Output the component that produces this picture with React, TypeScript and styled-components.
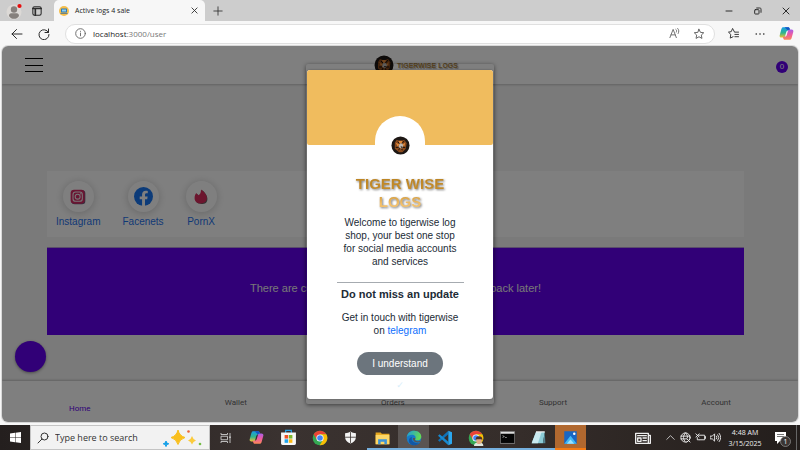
import React from "react";
import styled, { createGlobalStyle } from "styled-components";

const Global = createGlobalStyle`
  * { box-sizing: border-box; }
  body { margin: 0; font-family: "Liberation Sans", Arial, sans-serif; }
  button, input { font: inherit; color: inherit; }
  button { border: 0; padding: 0; background: none; }
`;

const UI = `"Open Sans", "Noto Sans", sans-serif`;

const Screen = styled.div`
  height: 100vh;
  display: flex;
  flex-direction: column;
  background: #f7f7f7;
  overflow: hidden;
`;

/* ---------- browser ---------- */
const TabStrip = styled.header`
  display: flex;
  align-items: center;
  flex: 0 0 21px;
  padding-left: 6px;
  background: #cdcdcd;
  font-family: ${UI};
`;
const IconButton = styled.button<{ $w: number; $color?: string }>`
  display: flex;
  align-items: center;
  justify-content: center;
  flex: 0 0 ${(p) => p.$w}px;
  height: 21px;
  color: ${(p) => p.$color ?? "#2c2c2c"};
`;
const Tab = styled.div`
  display: flex;
  align-items: center;
  align-self: flex-end;
  width: 151px;
  height: 21px;
  margin-left: 5px;
  padding-left: 5px;
  border-radius: 5px 5px 0 0;
  background: #f7f7f7;
`;
const TabTitle = styled.span`
  flex: 1;
  padding-left: 6px;
  color: #222;
  font-size: 7px;
  line-height: 12px;
`;
const Spacer = styled.div`
  flex: 1;
`;
const Toolbar = styled.div`
  display: flex;
  align-items: center;
  flex: 0 0 25px;
  padding: 0 1px 0 5px;
`;
const Address = styled.div`
  display: flex;
  align-items: center;
  flex: 1;
  height: 20px;
  margin: 0 5px 0 6px;
  padding: 0 3px 0 5px;
  border: 1px solid #e0e0e0;
  border-radius: 10px;
  background: #fff;
`;
const Url = styled.div`
  flex: 1;
  padding-left: 4px;
  color: #777;
  font: 8px/14px ${UI};
  b { color: #1c1c1c; font-weight: 400; }
`;

/* ---------- page ---------- */
const Page = styled.main`
  position: relative;
  display: flex;
  flex-direction: column;
  flex: 1;
  min-height: 0;
  margin: 0 2px 3px 2px;
  border-radius: 6px;
  background: #f4f4f4;
  overflow: hidden;
  box-shadow: 0 0 0 1px #d8d8d8;
`;
const AppBar = styled.div`
  display: grid;
  grid-template-columns: 1fr auto 1fr;
  align-items: center;
  flex: 0 0 38px;
  padding: 0 10px 0 23px;
  background: #fff;
  box-shadow: 0 1px 2px #0003;
`;
const Burger = styled.button`
  display: flex;
  flex-direction: column;
  justify-content: space-between;
  width: 18px;
  height: 14px;
  i { height: 1px; background: #000; }
`;
const Brand = styled.div`
  display: flex;
  align-items: center;
  gap: 3px;
  padding-left: 19px;
  color: #ad8440;
  font-weight: 700;
  font-size: 7px;
  text-shadow: 1px 1px 1px #0005;
`;
const CartBadge = styled.button`
  justify-self: end;
  width: 12px;
  height: 12px;
  margin-top: 4px;
  border-radius: 50%;
  background: #6200ee;
  color: #fff;
  font-size: 8px;
  line-height: 12px;
`;
const Content = styled.div`
  display: flex;
  flex-direction: column;
  flex: 1;
  gap: 10px;
  padding: 87px 54px 0 45px;
`;
const Categories = styled.div`
  display: flex;
  gap: 22px;
  height: 66px;
  padding: 10px 9px 0;
  background: #fff;
`;
const Category = styled.a`
  display: flex;
  flex-direction: column;
  align-items: center;
  gap: 3px;
  color: #1f72ec;
  font-size: 10px;
  line-height: 14px;
  text-decoration: none;
  white-space: nowrap;
`;
const Bubble = styled.span`
  display: flex;
  align-items: center;
  justify-content: center;
  width: 31px;
  height: 31px;
  border-radius: 50%;
  background: #fff;
  box-shadow: 0 1px 8px #0003;
`;
const EmptyState = styled.div`
  display: flex;
  align-items: center;
  justify-content: center;
  height: 88px;
  padding-bottom: 8px;
  border-top: 1px solid #b49ad8;
  background: #6200ee;
  color: #eee;
  font-size: 11px;
`;
const Fab = styled.button`
  position: absolute;
  left: 13px;
  bottom: 50px;
  width: 31px;
  height: 31px;
  border-radius: 50%;
  background: #6200ee;
  box-shadow: 0 1px 3px #0006;
`;
const BottomNav = styled.nav`
  display: flex;
  flex: 0 0 41px;
  padding-top: 15px;
  background: #fff;
  box-shadow: 0 -1px 2px #0003;
`;
const NavItem = styled.a<{ $active?: boolean }>`
  flex: 1 1 auto;
  padding-top: ${(p) => (p.$active ? 6 : 0)}px;
  color: ${(p) => (p.$active ? "#6200ee" : "#666")};
  font: 8px/14px Roboto, sans-serif;
  text-align: center;
  text-decoration: none;
`;

/* ---------- modal ---------- */
const Backdrop = styled.div`
  position: absolute;
  inset: 0;
  display: flex;
  align-items: center;
  justify-content: center;
  background: rgba(0, 0, 0, 0.5);
`;
const Paper = styled.div`
  width: 188px;
  padding: 6px 0 5px;
  border-radius: 2px;
  box-shadow: 0 1px 4px #0008;
`;
const Card = styled.section`
  display: flex;
  flex-direction: column;
  align-items: center;
  margin: 0 1px 0 1px;
  padding-bottom: 7px;
  border-radius: 3px;
  background: #fff;
  color: #212b36;
  text-align: center;
  overflow: hidden;
  box-shadow: 0 0 2px #0006;
`;
const Banner = styled.div`
  display: flex;
  justify-content: center;
  align-self: stretch;
  height: 75px;
  padding-top: 46px;
  border-radius: 0 0 2px 2px;
  background: #f0bc5e;
`;
const Seal = styled.div`
  display: flex;
  align-items: center;
  justify-content: center;
  width: 50px;
  height: 58px;
  border-radius: 25px;
  background: #fff;
`;
const Title = styled.h1`
  width: 127px;
  margin: 30px 0 5px;
  padding: 0 10px;
  background: linear-gradient(#b98222 0, #c98f2d 50%, #f3c06a 80%);
  background-clip: text;
  color: transparent;
  font-size: 15px;
  line-height: 18px;
  filter: drop-shadow(1px 1px 1px #0008);
`;
const Copy = styled.p`
  width: 122px;
  margin: 0;
  font-size: 10px;
  line-height: 13px;
  a { color: #0d6efd; text-decoration: none; }
`;
const Divider = styled.hr`
  width: 127px;
  margin: 14px 0 4px;
  border: 0;
  border-top: 1px solid #a6abb0;
`;
const Subtitle = styled.h2`
  margin: 0 0 9px;
  font-size: 11px;
  line-height: 15px;
  white-space: nowrap;
`;
const Confirm = styled.button`
  width: 86px;
  height: 23px;
  margin: 15px 0 3px;
  border-radius: 12px;
  background: #6c757d;
  color: #fff;
  font-size: 10px;
`;
const Tick = styled.span`
  color: #d9eefa;
  font: 9px/14px "DejaVu Sans", sans-serif;
`;

/* ---------- taskbar ---------- */
const Taskbar = styled.footer`
  display: flex;
  flex: 0 0 25px;
  background: linear-gradient(90deg, #241f1e, #3a3230 35%, #352d2a 65%, #231e1c);
  color: #eee;
  font-family: ${UI};
`;
const Start = styled.button`
  display: flex;
  align-items: center;
  justify-content: center;
  width: 30px;
`;
const Search = styled.label`
  display: flex;
  align-items: center;
  width: 180px;
  padding: 0 6px;
  border: 1px solid #c4c4c4;
  background: #f2f2f2;
  color: #333;
  input {
    flex: 1;
    min-width: 0;
    padding: 0 0 0 6px;
    border: 0;
    outline: 0;
    background: none;
    font-size: 9px;
  }
  input::placeholder { color: #333; opacity: 1; }
`;
const Apps = styled.div`
  display: grid;
  grid-template-columns: repeat(12, 1fr);
  flex: 0 0 47%;
`;
const AppButton = styled.button<{ $bg?: string; $line?: string }>`
  display: flex;
  align-items: center;
  justify-content: center;
  background: ${(p) => p.$bg ?? "none"};
  box-shadow: ${(p) => (p.$line ? `inset 0 -2px 0 ${p.$line}` : "none")};
`;
const Tray = styled.div`
  display: flex;
  align-items: center;
  height: 25px;
`;
const TrayButton = styled.button<{ $w: number }>`
  display: flex;
  align-items: center;
  justify-content: center;
  width: ${(p) => p.$w}px;
`;
const Clock = styled.div`
  width: 44px;
  font-size: 7px;
  line-height: 11px;
  text-align: center;
  white-space: nowrap;
`;
const ShowDesktop = styled.button`
  width: 4px;
  height: 25px;
  border-left: 1px solid #666;
`;

/* ---------- drawings ---------- */
const Line = ({ w = 11, vb = 24, sw = 2, children }: { w?: number; vb?: number; sw?: number; children: React.ReactNode }) => (
  <svg width={w} height={w} viewBox={`0 0 ${vb} ${vb}`} fill="none" stroke="currentColor" strokeWidth={sw} strokeLinecap="round" strokeLinejoin="round">
    {children}
  </svg>
);
const STAR = "M12 2.5l2.9 6.2 6.6.8-4.9 4.6 1.3 6.7-5.9-3.3-5.9 3.3 1.3-6.7-4.9-4.6 6.6-.8z";

const Profile = () => (
  <svg width="18" height="18" viewBox="0 0 18 18">
    <circle cx="8" cy="10" r="7.5" fill="#dcd9d6" />
    <circle cx="8" cy="7.5" r="3.2" fill="#85807c" />
    <path d="M3 14c0-2 1-2.800 2.200-2.800h5.600c1.200 0 2.200.8 2.200 2.800-1.200 2-3 2.800-5 2.800s-3.800-.8-5-2.800z" fill="#85807c" />
    <circle cx="13.500" cy="4" r="2.100" fill="#e80c0c" />
  </svg>
);
const Favicon = () => (
  <svg width="10" height="10" viewBox="0 0 20 20">
    <circle cx="10" cy="10" r="10" fill="#f5be4b" />
    <rect x="4" y="5" width="12" height="8" rx="1" fill="#2f7bb5" />
    <rect x="6" y="7" width="8" height="4" fill="#8fd0f3" />
    <path d="M3 14h14v1.500H3z" fill="#426f94" />
  </svg>
);
const Copilot = ({ w = 15 }: { w?: number }) => (
  <svg width={w} height={w} viewBox="0 0 24 24">
    <defs>
      <linearGradient id="cpA" x1="0" y1="0" x2="0" y2="1">
        <stop offset="0" stopColor="#159de6" /><stop offset=".55" stopColor="#32b58b" /><stop offset="1" stopColor="#f5c331" />
      </linearGradient>
      <linearGradient id="cpB" x1="0" y1="0" x2="0" y2="1">
        <stop offset="0" stopColor="#a65ee8" /><stop offset=".5" stopColor="#ee5aa0" /><stop offset="1" stopColor="#fb8a56" />
      </linearGradient>
    </defs>
    <path d="M7 2h7.500c1.500 0 2.200 1 2.600 2.200L18 7h-3c-2 0-2.900 1-3.400 2.700L9.500 17c-.5 1-1.200 1.500-2.500 1.500H4c-2.500 0-3.500-1.800-2.800-4.200l2.500-9C4.300 3 5.300 2 7 2z" fill="url(#cpA)" />
    <path d="M17 22H9.500c-1.500 0-2.200-1-2.600-2.200L6 17h3c2 0 2.900-1 3.400-2.700L14.500 7c.5-1 1.200-1.500 2.500-1.500h3c2.500 0 3.500 1.800 2.800 4.200l-2.500 9C19.700 21 18.700 22 17 22z" fill="url(#cpB)" />
    <path d="M9 2h5.500c1.500 0 2.200 1 2.600 2.200l.4 1.300c-2 0-2.800.5-3.300 1.500z" fill="#1553c5" />
  </svg>
);
const Tiger = ({ w }: { w: number }) => (
  <svg width={w} height={w} viewBox="0 0 20 20">
    <circle cx="10" cy="10" r="9.500" fill="#1d1714" />
    <path d="M4 7l2-3 2.500 1h3L14 4l2.500 3.500-1 6L12 17H8.500L4 13.500z" fill="#8b4a1c" />
    <path d="M5 7l4 2-2 2zM15 7l-3 2 2 2zM8 5l1 3h2l1-3z" fill="#e1893a" />
    <path d="M7 6l2 2M14 5l-2.500 3M5 12l3 0M15 12l-3 0M8 15l1-2M12 15l-1-2" stroke="#16100d" strokeWidth="1" />
    <path d="M9 8h3l1 2.500-2 3-3-2z" fill="#bcb7b0" />
    <path d="M10 11h2l-1 2z" fill="#271812" />
  </svg>
);
const Instagram = () => (
  <svg width="16" height="16" viewBox="0 0 24 24">
    <rect x="2" y="2" width="21" height="21" rx="5" fill="#686080" />
    <rect x="1" y="1" width="21" height="21" rx="5" fill="#d52b64" />
    <g fill="none" stroke="#eee" strokeWidth="1.600">
      <rect x="4.500" y="4.500" width="14" height="14" rx="4" /><circle cx="11.500" cy="11.500" r="3.700" />
    </g>
    <circle cx="16" cy="7.200" r="1" fill="#fff" />
  </svg>
);
const Facebook = () => (
  <svg width="19" height="19" viewBox="0 0 24 24">
    <circle cx="12" cy="12" r="12" fill="#1877f2" />
    <path d="M16.700 15.500l.5-3.500h-3.300V9.800c0-1 .5-1.900 2-1.900h1.500v-3s-1.400-.2-2.700-.2c-2.700 0-4.500 1.700-4.500 4.700V12h-3v3.500h3v8.400a12 12 0 0 0 3.700 0v-8.400z" fill="#fff" />
  </svg>
);
const Flame = () => (
  <svg width="14" height="16" viewBox="0 0 24 26">
    <path d="M15 2c3 3 8 8 8 14 0 7-4 9-10 9S3 23 3 17c0-4 1-7 3-9 1 1 2 3 2 4 4-1 6-5 5-10z" fill="#666" />
    <path d="M12 0c5 4 10 9 10 14 0 7-4 10-10 10S1 21 1 15c0-4 1-7 3-9 1 1 2 3 3 4 4-1 5-5 5-10z" fill="#d82b5c" />
  </svg>
);
const Sparkles = () => (
  <svg width="40" height="18" viewBox="0 0 40 18">
    <path d="M15 1q1.500 6 7 7.500-5.500 1.500-7 7-1.500-5.500-7-7 5.500-1.500 7-7.500z" fill="#f9bf1d" stroke="#f9bf1d" strokeLinejoin="round" />
    <path d="M29 7q1 3.500 4 4.500-3 1-4 4-1-3-4-4 3-1 4-4.500z" fill="#fbcb3c" />
    <path d="M3 12l.8 2 2 .8-2 .8-.8 2-.8-2-2-.8 2-.8z" fill="#14a0e8" stroke="#14a0e8" />
    <circle cx="25.500" cy="2.500" r="1.300" fill="#ec6237" /><circle cx="37" cy="15" r="1.300" fill="#75bd46" />
  </svg>
);
const Chrome = ({ face }: { face?: boolean }) => (
  <svg width="16" height="16" viewBox="0 0 24 24">
    <circle cx="12" cy="12" r="11" fill="#34a853" />
    <path d="M12 1a11 11 0 0 1 9.500 5.500H12L7.300 14.700 2.500 6.500A11 11 0 0 1 12 1z" fill="#ea4335" />
    <path d="M21.500 6.500A11 11 0 0 1 11.500 23l5.200-8.300L12 6.500z" fill="#fbbc05" />
    <circle cx="12" cy="12" r="5.400" fill="#fff" /><circle cx="12" cy="12" r="4.200" fill="#4285f4" />
    {face && (
      <g>
        <path d="M9 24c0-4 2-5 7-5s7 1 7 5z" fill="#dfe7dc" />
        <path d="M11.500 15c0-4.500 2-5.500 5-5.500s5 1 5 5.500z" fill="#4a3328" />
        <path d="M12.500 14h8v3.500c0 2-2 3.500-4 3.500s-4-1.500-4-3.500z" fill="#e0a985" />
      </g>
    )}
  </svg>
);
const TaskView = () => (
  <svg width="12" height="12" viewBox="0 0 24 24" fill="none" stroke="#ccc" strokeWidth="1.800">
    <path d="M2 2v3h13V2M2 22v-3h13v3M2 8.500h13v7H2zM20 2v20" /><path d="M18.500 9h3v3h-3z" fill="#ccc" stroke="none" />
  </svg>
);
const Store = () => (
  <svg width="17" height="17" viewBox="0 0 24 24">
    <path d="M8 6V2h8v4" fill="none" stroke="#25a2e8" strokeWidth="1.700" />
    <path d="M1.500 5h21v15.500c0 1-.8 2-2 2h-17c-1.200 0-2-1-2-2z" fill="#f7f7f7" />
    <path d="M6.500 8.500h5v5h-5z" fill="#ef5025" /><path d="M12.500 8.500h5v5h-5z" fill="#7eb82c" />
    <path d="M6.500 14.500h5v5h-5z" fill="#20a4ed" /><path d="M12.500 14.500h5v5h-5z" fill="#fbb813" />
  </svg>
);
const Shield = () => (
  <svg width="13" height="13" viewBox="0 0 24 24">
    <path d="M12 1c3 2 6 3 10 3v7c0 6-4 10-10 12C6 21 2 17 2 11V4c4 0 7-1 10-3z" fill="#f4f4f4" />
    <path d="M12 2v20M2 11.500h20" stroke="#3a3230" strokeWidth="1.500" />
  </svg>
);
const Folder = () => (
  <svg width="15" height="14" viewBox="0 0 24 22">
    <path d="M1 2h8l2 2h12v17H1z" fill="#e5a51d" /><path d="M1 6h22v15H1z" fill="#fcd667" />
    <path d="M5 21v-8h14v8h-4v-4H9v4z" fill="#3d94d8" />
  </svg>
);
const Edge = () => (
  <svg width="16" height="16" viewBox="0 0 24 24">
    <defs><linearGradient id="eg" x1="0" y1="0" x2="1" y2=".3"><stop offset="0" stopColor="#1a9ae0" /><stop offset="1" stopColor="#63d957" /></linearGradient></defs>
    <circle cx="12" cy="12" r="11" fill="#167bc9" />
    <path d="M1 11C2 5 6 1 12 1c7 0 11 4.500 11 9 0 3.500-3 5.500-6 5.500-2.500 0-4-1-3-2.500 1.500-3-1-6-5-6-3.500 0-6.500 1.500-8 4z" fill="url(#eg)" />
    <path d="M9 11c-2 5 3 10 11 8.500C16 24 8 24 5 19c-1.500-4 0-8 4-8z" fill="#1257a5" />
    <path d="M14 12c-2 4 2 6.500 8 4l-1 2c-6 2-11-1-10.500-6z" fill="#5a5452" />
  </svg>
);
const VSCode = () => (
  <svg width="16" height="16" viewBox="0 0 24 24">
    <path d="M17 1v5.500L4 17.500 1.500 15.500z" fill="#0e72b8" /><path d="M17 23v-5.500L4 6.500 1.500 8.500z" fill="#1889d0" />
    <path d="M17 1l5.500 2.500v17L17 23z" fill="#2ba7ee" />
  </svg>
);
const Terminal = () => (
  <svg width="15" height="13" viewBox="0 0 24 20">
    <path d="M.5.5h23v19H.5z" fill="#050505" stroke="#aaa" /><path d="M1 1h22v3H1z" fill="#ddd" />
    <path d="M4 7l3 1.500L4 10M8 10h3" stroke="#ccc" fill="none" />
  </svg>
);
const Notepad = () => (
  <svg width="15" height="15" viewBox="0 0 24 24">
    <path d="M8 3h14l-3 18H1z" fill="#8ccbd6" /><path d="M8 3h9l-6 18H1z" fill="#c9eaf0" />
    <path d="M22 3l1 18h-4z" fill="#52828f" /><path d="M8 3h14" stroke="#eee" strokeWidth="2" />
  </svg>
);
const Photos = () => (
  <svg width="15" height="15" viewBox="0 0 24 24">
    <rect x="2" y="2" width="20" height="20" fill="#1866c4" /><path d="M2 22L12 9l10 13z" fill="#40b8f5" />
    <path d="M6 22l6-7 6 7z" fill="#9be3ff" /><circle cx="18" cy="6" r="2" fill="#fff" />
  </svg>
);
const Windows = () => (
  <svg width="11" height="11" viewBox="0 0 22 22" fill="#fff">
    <path d="M0 3l10-1.500V10.500H0zM11 1.300L22 0v10.500H11zM0 11.500h10v9L0 19zM11 11.500h11V22l-11-1.500z" />
  </svg>
);
const Notification = () => (
  <svg width="18" height="18" viewBox="0 0 18 18">
    <path d="M2 3h11v9H7l-3 3v-3H2z" fill="#fff" /><path d="M4 5.500h7M4 7.500h7" stroke="#777" />
    <circle cx="12.500" cy="12.500" r="5" fill="#3a3533" stroke="#999" strokeWidth=".7" />
    <text x="12.500" y="15" fill="#fff" fontSize="7" fontFamily="Open Sans" textAnchor="middle">1</text>
  </svg>
);

const CATEGORIES = [
  { label: "Instagram", icon: <Instagram /> },
  { label: "Facenets", icon: <Facebook /> },
  { label: "PornX", icon: <Flame /> },
];
const LINE = "#76b0de";
const APPS: { name: string; icon: React.ReactNode; bg?: string; line?: string }[] = [
  { name: "Task view", icon: <TaskView /> },
  { name: "Copilot", icon: <Copilot /> },
  { name: "Store", icon: <Store /> },
  { name: "Chrome", icon: <Chrome /> },
  { name: "Security", icon: <Shield /> },
  { name: "Files", icon: <Folder />, line: LINE },
  { name: "Edge", icon: <Edge />, bg: "#5a5452", line: LINE },
  { name: "Code", icon: <VSCode />, line: LINE },
  { name: "Chrome profile", icon: <Chrome face />, line: LINE },
  { name: "Terminal", icon: <Terminal />, line: LINE },
  { name: "Notepad", icon: <Notepad />, line: LINE },
  { name: "Photos", icon: <Photos />, bg: "#b0682f", line: "#f47b14" },
];

export default function App() {
  return (
    <Screen>
      <Global />
      <TabStrip>
        <IconButton $w={18} aria-label="Profile"><Profile /></IconButton>
        <IconButton $w={25} aria-label="Tab actions">
          <Line w={10} sw={2.5}><rect x="2" y="2" width="20" height="20" rx="4" /><path d="M2 6h20M8 7v15" strokeWidth="4" /></Line>
        </IconButton>
        <Tab>
          <Favicon />
          <TabTitle>Active logs 4 sale</TabTitle>
          <IconButton $w={21} aria-label="Close tab"><Line w={7} sw={3}><path d="M3 3l18 18M21 3L3 21" /></Line></IconButton>
        </Tab>
        <IconButton $w={25} aria-label="New tab"><Line w={10}><path d="M12 2v20M2 12h20" /></Line></IconButton>
        <Spacer />
        <IconButton $w={29} aria-label="Minimize"><Line w={8} sw={3}><path d="M3 12h18" /></Line></IconButton>
        <IconButton $w={29} aria-label="Restore">
          <Line w={8} sw={3}><rect x="2" y="8" width="13" height="13" rx="2" /><path d="M8 3h9c3 0 4 1 4 4v9" /></Line>
        </IconButton>
        <IconButton $w={28} aria-label="Close"><Line w={8} sw={3}><path d="M3 3l18 18M21 3L3 21" /></Line></IconButton>
      </TabStrip>
      <Toolbar>
        <IconButton $w={24} aria-label="Back"><Line w={12} sw={2}><path d="M22 12H2M11 3l-9 9 9 9" /></Line></IconButton>
        <IconButton $w={30} aria-label="Reload"><Line w={12}><path d="M21 9a10 10 0 1 0 1 4M21 2v7h-7" /></Line></IconButton>
        <Address>
          <IconButton $w={18} $color="#666" aria-label="Site information">
            <Line><circle cx="12" cy="12" r="10.500" /><path d="M12 11v6M12 7v.5" /></Line>
          </IconButton>
          <Url><b>localhost</b>:3000/user</Url>
          <IconButton $w={25} $color="#666" aria-label="Read aloud">
            <Line><path d="M2 21L9 3l7 18M4.500 15h9M15 3c2 1 2 4 1 6M19 1c3 3 3 7 1 11" /></Line>
          </IconButton>
          <IconButton $w={24} $color="#666" aria-label="Add favorite"><Line w={12}><path d={STAR} /></Line></IconButton>
        </Address>
        <IconButton $w={26} aria-label="Favorites">
          <Line><path d="M14 8.500L10 1 7 8l-6 1 5 5-1 8 6-3M15 9h8M15 14h8M15 19h8" /></Line>
        </IconButton>
        <IconButton $w={28} aria-label="More"><Line w={10} sw={4}><path d="M3 12h.1M12 12h.1M21 12h.1" /></Line></IconButton>
        <IconButton $w={25} aria-label="Copilot"><Copilot /></IconButton>
      </Toolbar>

      <Page>
        <AppBar>
          <Burger aria-label="Menu"><i /><i /><i /></Burger>
          <Brand><Tiger w={20} />TIGERWISE LOGS</Brand>
          <CartBadge aria-label="Cart">0</CartBadge>
        </AppBar>
        <Content>
          <Categories>
            {CATEGORIES.map((c) => (
              <Category href="#" key={c.label}><Bubble>{c.icon}</Bubble>{c.label}</Category>
            ))}
          </Categories>
          <EmptyState>There are currently no products available. Check back later!</EmptyState>
        </Content>
        <BottomNav>
          {["Home", "Wallet", "Orders", "Support", "Account"].map((n) => (
            <NavItem href="#" key={n} $active={n === "Home"}>{n}</NavItem>
          ))}
        </BottomNav>
        <Fab aria-label="Chat" />
        <Backdrop>
          <Paper role="dialog" aria-label="Tiger Wise Logs">
            <Card>
              <Banner><Seal><Tiger w={19} /></Seal></Banner>
              <Title>TIGER WISE LOGS</Title>
              <Copy>Welcome to tigerwise log shop, your best one stop for social media accounts and services</Copy>
              <Divider />
              <Subtitle>Do not miss an update</Subtitle>
              <Copy>Get in touch with tigerwise on <a href="#">telegram</a></Copy>
              <Confirm>I understand</Confirm>
              <Tick>✓</Tick>
            </Card>
          </Paper>
        </Backdrop>
      </Page>

      <Taskbar>
        <Start aria-label="Start"><Windows /></Start>
        <Search>
          <Line w={12} sw={2}><circle cx="15" cy="9" r="7" /><path d="M10 14l-8 8" /></Line>
          <input aria-label="Search" placeholder="Type here to search" />
          <Sparkles />
        </Search>
        <Apps>
          {APPS.map((a) => (
            <AppButton key={a.name} aria-label={a.name} $bg={a.bg} $line={a.line}>{a.icon}</AppButton>
          ))}
        </Apps>
        <Spacer />
        <Tray>
          <TrayButton $w={40} aria-label="News">
            <Line w={16} sw={2}><path d="M1 5h19v15H1zM20 8h3v12h-3M4 8.500h13M4 12h5v5H4zM12 12h5M12 16h5" /></Line>
          </TrayButton>
          <TrayButton $w={15} aria-label="Hidden icons"><Line w={9}><path d="M2 17L12 7l10 10" /></Line></TrayButton>
          <TrayButton $w={15} aria-label="Network">
            <Line w={11}><circle cx="12" cy="12" r="10" /><path d="M2 9h20M2 15h12M12 2c-6 6-6 14 0 20M12 2c4 4 5 7 4 11M15 15l7 7M22 15l-7 7" /></Line>
          </TrayButton>
          <TrayButton $w={15} aria-label="Battery">
            <Line w={11}><path d="M8 7h13v10H10M23 10v4M2 4l7 7M9 4l-7 7M5 12v5h4" /></Line>
          </TrayButton>
          <TrayButton $w={15} aria-label="Volume">
            <Line w={11}><path d="M1 9h4l5-5v16l-5-5H1zM14 9q2 3 0 6M17 6q5 6 0 12M20 3q7 9 0 18" /></Line>
          </TrayButton>
          <Clock>4:48 AM<br />3/15/2025</Clock>
          <TrayButton $w={29} aria-label="Notifications"><Notification /></TrayButton>
          <ShowDesktop aria-label="Show desktop" />
        </Tray>
      </Taskbar>
    </Screen>
  );
}
